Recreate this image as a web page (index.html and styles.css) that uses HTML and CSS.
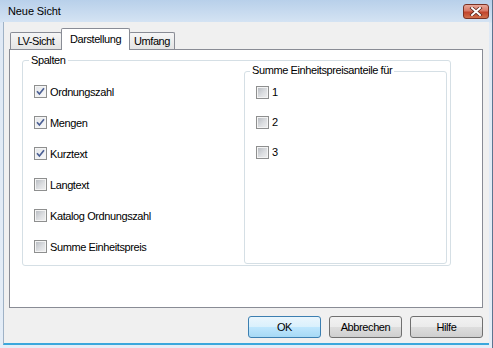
FILE: index.html
```html
<!DOCTYPE html>
<html lang="de">
<head>
    <meta charset="UTF-8">
    <title>Neue Sicht</title>
    <link rel="stylesheet" href="styles.css">
</head>
<body>
<div class="window">
    <div class="titlebar">
        <span class="title">Neue Sicht</span>
        <span class="close">
            <svg width="14" height="9" viewBox="0 0 14 9">
                <path d="M3 1 L11 8 M11 1 L3 8" stroke="#5a2418" stroke-width="3.4" stroke-linecap="square"/>
                <path d="M3 1 L11 8 M11 1 L3 8" stroke="#fff" stroke-width="2" stroke-linecap="square"/>
            </svg>
        </span>
    </div>
    <div class="client">
        <div class="tabs">
            <div class="tab tab-lv">LV-Sicht</div>
            <div class="tab tab-active">Darstellung</div>
            <div class="tab tab-umfang">Umfang</div>
        </div>
        <div class="panel">
            <div class="group group-outer">
                <span class="group-title">Spalten</span>
                <div class="list list-left">
                    <label class="row"><span class="cb checked"><svg width="11" height="11" viewBox="0 0 11 11"><path d="M2 5.3 L4.4 8 L9 2.3" fill="none" stroke="#4b5f94" stroke-width="1.7"/></svg></span>Ordnungszahl</label>
                    <label class="row"><span class="cb checked"><svg width="11" height="11" viewBox="0 0 11 11"><path d="M2 5.3 L4.4 8 L9 2.3" fill="none" stroke="#4b5f94" stroke-width="1.7"/></svg></span>Mengen</label>
                    <label class="row"><span class="cb checked"><svg width="11" height="11" viewBox="0 0 11 11"><path d="M2 5.3 L4.4 8 L9 2.3" fill="none" stroke="#4b5f94" stroke-width="1.7"/></svg></span>Kurztext</label>
                    <label class="row"><span class="cb"></span>Langtext</label>
                    <label class="row"><span class="cb"></span>Katalog Ordnungszahl</label>
                    <label class="row"><span class="cb"></span>Summe Einheitspreis</label>
                </div>
                <div class="group group-inner">
                    <span class="group-title">Summe Einheitspreisanteile für</span>
                    <div class="list list-right">
                        <label class="row row-small"><span class="cb"></span>1</label>
                        <label class="row row-small"><span class="cb"></span>2</label>
                        <label class="row row-small"><span class="cb"></span>3</label>
                    </div>
                </div>
            </div>
        </div>
        <div class="buttons">
            <button class="btn btn-default">OK</button>
            <button class="btn">Abbrechen</button>
            <button class="btn">Hilfe</button>
        </div>
    </div>
</div>
</body>
</html>
```

FILE: styles.css
```css
body {
    margin: 0;
    font-family: "Liberation Sans", Arial, sans-serif;
    font-size: 11px;
    color: #000;
}
.window {
    width: 493px;
    height: 348px;
    box-sizing: border-box;
    padding: 0 3px 3px 3px;
    display: flex;
    flex-direction: column;
    background: linear-gradient(to bottom, #b8d0ea 0, #d4e3f3 22px, #dfe9f5 23px, #e4edf7 100%);
    border-right: 1px solid #5d7590;
}
.titlebar {
    height: 22px;
    flex: none;
    display: flex;
    justify-content: space-between;
    align-items: flex-start;
    padding-left: 5px;
}
.title {
    line-height: 22px;
    letter-spacing: -0.1px;
}
.close {
    margin-top: 4px;
    width: 26px;
    height: 15px;
    box-sizing: border-box;
    border: 1px solid #7a3224;
    border-radius: 3px;
    background: linear-gradient(to bottom, #e9a898 0, #d77866 45%, #c2442c 55%, #d0704c 100%);
    display: flex;
    align-items: center;
    justify-content: center;
}
.client {
    flex: 1;
    background: #f0f0f0;
    border-left: 1px solid #9fb2c6;
    border-bottom: 2px solid #3aa7dc;
    padding: 6px 6px 0 5px;
    letter-spacing: -0.4px;
}
.tabs {
    display: flex;
    align-items: flex-end;
    height: 22px;
    margin: 0 0 -1px 1px;
    position: relative;
}
.tab {
    box-sizing: border-box;
    height: 17px;
    margin-bottom: 1px;
    border: 1px solid #898c95;
    border-bottom: none;
    border-radius: 2px 2px 0 0;
    background: linear-gradient(to bottom, #f6f6f6, #e4e4e4);
    display: flex;
    align-items: center;
    justify-content: center;
}
.tab-lv {
    width: 52px;
    margin-right: -1px;
}
.tab-umfang {
    width: 46px;
    margin-left: -1px;
}
.tab-active {
    width: 69px;
    height: 22px;
    margin-bottom: 0;
    padding-bottom: 2px;
    background: #fff;
    position: relative;
    z-index: 1;
}
.panel {
    width: 474px;
    height: 259px;
    box-sizing: border-box;
    border: 1px solid #898c95;
    background: #fff;
    padding: 10px 0 0 12px;
}
.group {
    position: relative;
    border: 1px solid #d5dfe5;
    border-radius: 3px;
    box-sizing: border-box;
}
.group-title {
    position: absolute;
    top: -7px;
    left: 6px;
    padding: 0 2px;
    line-height: 13px;
    background: #fff;
}
.group-outer {
    width: 429px;
    height: 206px;
    display: flex;
    padding: 10px 3px 1px 0;
}
.group-inner {
    width: 203px;
}
.group-inner .group-title {
    top: -8px;
    left: 5px;
}
.list {
    display: flex;
    flex-direction: column;
}
.list-left {
    width: 221px;
    box-sizing: border-box;
    padding: 5px 0 0 11px;
}
.list-right {
    padding: 5px 0 0 11px;
}
.row {
    height: 31px;
    display: flex;
    align-items: center;
}
.row-small {
    height: 30px;
}
.cb {
    width: 13px;
    height: 13px;
    box-sizing: border-box;
    border: 1px solid #8e8f8f;
    margin-right: 3px;
    flex: none;
    background: linear-gradient(135deg, #b4b8be 0, #dcdee1 55%, #f1f1f1 100%);
    box-shadow: inset 0 0 0 1px #f4f4f4;
}
.cb.checked {
    background: linear-gradient(135deg, #e3e5e8 0, #fafafa 100%);
}
.cb svg {
    display: block;
}
.buttons {
    width: 474px;
    display: flex;
    justify-content: flex-end;
    gap: 8px;
    margin-top: 8px;
}
.btn {
    width: 73px;
    height: 22px;
    padding: 0;
    font-family: inherit;
    font-size: 11px;
    letter-spacing: -0.4px;
    color: #000;
    border: 1px solid #707070;
    border-radius: 3px;
    background: linear-gradient(to bottom, #f2f2f2 0, #ebebeb 50%, #dddddd 51%, #cfcfcf 100%);
}
.btn-default {
    border-color: #3c7fb1;
    background: linear-gradient(to bottom, #eaf6fd 0, #d9f0fc 50%, #bee6fd 51%, #a7d9f5 100%);
}
```
